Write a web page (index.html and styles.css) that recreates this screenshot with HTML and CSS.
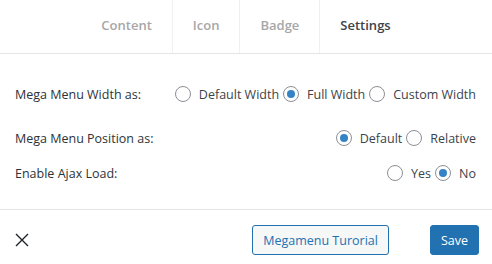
FILE: index.html
```html
<!DOCTYPE html>
<html lang="en">
<head>
    <meta charset="UTF-8">
    <meta name="viewport" content="width=device-width, initial-scale=1.0">
    <title>Mega Menu Settings</title>
    <link rel="stylesheet" href="styles.css">
</head>
<body>
    <nav class="tabs">
        <a class="tab">Content</a>
        <a class="tab">Icon</a>
        <a class="tab">Badge</a>
        <a class="tab active">Settings</a>
    </nav>
    <div class="settings">
        <div class="row">
            <span class="label">Mega Menu Width as:</span>
            <div class="options">
                <label><input type="radio" name="width"> Default Width</label>
                <label><input type="radio" name="width" checked> Full Width</label>
                <label><input type="radio" name="width"> Custom Width</label>
            </div>
        </div>
        <div class="row">
            <span class="label">Mega Menu Position as:</span>
            <div class="options">
                <label><input type="radio" name="position" checked> Default</label>
                <label><input type="radio" name="position"> Relative</label>
            </div>
        </div>
        <div class="row">
            <span class="label">Enable Ajax Load:</span>
            <div class="options">
                <label><input type="radio" name="ajax"> Yes</label>
                <label><input type="radio" name="ajax" checked> No</label>
            </div>
        </div>
    </div>
    <footer class="footer">
        <button class="close-btn" aria-label="Close">
            <svg width="14" height="14" viewBox="0 0 14 14"><path d="M1 1L13 13M13 1L1 13" stroke="#1d2327" stroke-width="1.4"/></svg>
        </button>
        <div class="actions">
            <button class="btn btn-secondary">Megamenu Turorial</button>
            <button class="btn btn-primary">Save</button>
        </div>
    </footer>
</body>
</html>
```

FILE: styles.css
```css
body {
    font-family: "Open Sans", "Noto Sans", sans-serif;
    font-size: 12.5px;
    color: #2c3338;
    background: #fff;
    margin: 0;
}
.tabs {
    display: flex;
    justify-content: center;
    height: 53px;
    border-bottom: 1px solid #e5e5e5;
}
.tab {
    display: flex;
    align-items: center;
    padding: 0 20px 4px;
    font-size: 13px;
    font-weight: 600;
    color: #a7a7a7;
    border-right: 1px solid #f0f0f0;
}
.tab:last-child {
    border-right: none;
}
.tab.active {
    color: #3c434a;
}
.settings {
    padding: 28px 16px 24px 15px;
}
.row {
    display: flex;
    justify-content: space-between;
    align-items: center;
    height: 24px;
    margin-bottom: 20px;
}
.row + .row {
    margin-bottom: 11px;
}
.row:last-child {
    margin-bottom: 0;
}
.options {
    display: flex;
    align-items: center;
    color: #3c434a;
}
.options label {
    display: flex;
    align-items: center;
    margin-left: 4px;
}
.options input[type="radio"] {
    appearance: none;
    width: 16px;
    height: 16px;
    margin: 0 8px 0 0;
    border: 1px solid #8c8f94;
    border-radius: 50%;
    background: #fff;
    display: grid;
    place-items: center;
}
.options input[type="radio"]:checked::before {
    content: "";
    width: 8px;
    height: 8px;
    border-radius: 50%;
    background: #3582c4;
}
.footer {
    display: flex;
    justify-content: space-between;
    align-items: center;
    border-top: 1px solid #e5e5e5;
    padding: 15px 13px 16px 15px;
}
.close-btn {
    background: transparent;
    border: none;
    padding: 0;
    display: flex;
}
.actions {
    display: flex;
    gap: 41px;
}
.btn {
    font-family: inherit;
    font-size: 12.5px;
    height: 30px;
    padding: 0 10px;
    border-radius: 3px;
    cursor: pointer;
}
.btn-secondary {
    background: #f6f7f7;
    color: #2271b1;
    border: 1px solid #2271b1;
}
.btn-primary {
    background: #2271b1;
    color: #fff;
    border: 1px solid #2271b1;
}
```
